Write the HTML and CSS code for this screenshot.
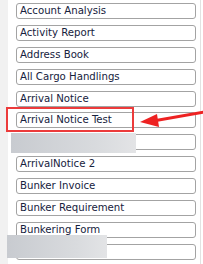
FILE: index.html
```html
<!DOCTYPE html>
<html>
<head>
<meta charset="utf-8">
<link rel="stylesheet" href="styles.css">
</head>
<body>
<div class="page">
  <div class="strip"></div>
  <div class="list">
    <div class="item">Account Analysis</div>
    <div class="item">Activity Report</div>
    <div class="item">Address Book</div>
    <div class="item">All Cargo Handlings</div>
    <div class="item">Arrival Notice</div>
    <div class="item">Arrival Notice Test</div>
    <div class="item"></div>
    <div class="item">ArrivalNotice 2</div>
    <div class="item">Bunker Invoice</div>
    <div class="item">Bunker Requirement</div>
    <div class="item">Bunkering Form</div>
    <div class="item"></div>
  </div>
  <div class="edge"></div>
  <div class="highlight"></div>
  <svg class="arrow" width="70" height="24" viewBox="0 0 70 24">
    <line x1="14" y1="12" x2="66" y2="3" stroke="#ee2222" stroke-width="3"/>
    <polygon points="1,13 18,5 20,18" fill="#ee2222"/>
  </svg>
  <div class="redact r1"></div>
  <div class="redact r2"></div>
</div>
</body>
</html>
```
FILE: styles.css
```css
html, body {
  margin: 0;
  padding: 0;
  background: #ffffff;
}
.page {
  position: relative;
  width: 203px;
  height: 264px;
  overflow: hidden;
  display: flex;
}
.strip {
  width: 8px;
  background: #f1f1f1;
  flex: none;
}
.list {
  display: flex;
  flex-direction: column;
  gap: 5.9px;
  padding: 3px 0 0 8px;
  width: 180px;
}
.item {
  box-sizing: border-box;
  height: 16px;
  width: 180px;
  border: 1px solid #a3a3a3;
  border-radius: 3px;
  font-family: "DejaVu Sans Condensed", "Liberation Sans", sans-serif;
  font-size: 11.3px;
  line-height: 14px;
  color: #16223d;
  padding-left: 3px;
  white-space: nowrap;
}
.edge {
  width: 1px;
  margin-left: 4px;
  background: #e2e2e2;
  flex: none;
}
.highlight {
  position: absolute;
  left: 6px;
  top: 107px;
  width: 128px;
  height: 25px;
  box-sizing: border-box;
  border: 2.5px solid #ec3b3b;
}
.arrow {
  position: absolute;
  left: 139px;
  top: 109px;
}
.redact {
  position: absolute;
  background: linear-gradient(90deg, #c8cbd0, #d9dbde 70%, #e3e4e6);
}
.r1 {
  left: 11px;
  top: 133px;
  width: 125px;
  height: 20px;
}
.r2 {
  left: 7px;
  top: 235px;
  width: 100px;
  height: 23px;
}
```
